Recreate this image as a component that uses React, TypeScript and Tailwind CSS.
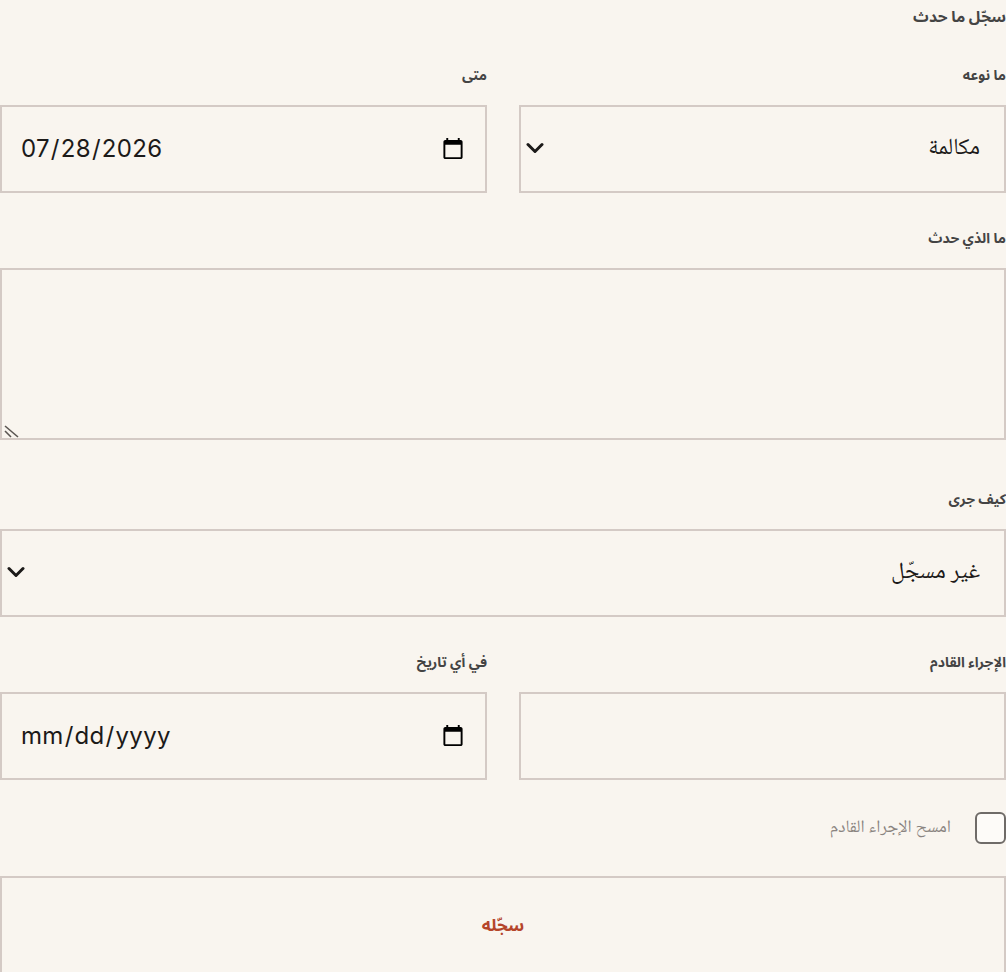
import { useState } from "react";

const naskh = '"Noto Naskh Arabic", "Noto Sans Arabic", "DejaVu Sans", sans-serif';
const sansArabic = '"Noto Sans Arabic", "DejaVu Sans", sans-serif';
const arabicInput = { fontFamily: naskh };

const labelCls = "block text-[14px] leading-5 font-bold text-[#444]";
const fieldCls =
  "block w-full h-[88px] mt-5 border-2 border-[#d4cac5] bg-[#f9f5ef] px-[18px] text-[24px] text-[#1c1a19] outline-none";

function Chevron() {
  return (
    <svg
      width="18"
      height="11"
      viewBox="0 0 18 11"
      className="pointer-events-none absolute left-[7px] top-[43px] -translate-y-1/2"
    >
      <polyline points="2,2 9,9 16,2" fill="none" stroke="#1c1a19" strokeWidth="3" strokeLinecap="round" strokeLinejoin="round" />
    </svg>
  );
}

function Select({ options, value }: { options: { v: string; t: string }[]; value: string }) {
  return (
    <div className="relative mt-5">
      <select
        defaultValue={value}
        style={arabicInput}
        className="block w-full h-[88px] appearance-none border-2 border-[#d4cac5] bg-[#f9f5ef] pr-6 pl-10 text-[23px] text-[#1c1a19] outline-none"
      >
        {options.map((o) => (
          <option key={o.v} value={o.v}>
            {o.t}
          </option>
        ))}
      </select>
      <Chevron />
    </div>
  );
}

export default function App() {
  const [clearNext, setClearNext] = useState(false);

  return (
    <div
      dir="rtl"
      className="min-h-[972px] w-full bg-[#f9f5ef] pt-[7px]"
      style={{ fontFamily: '"Inter", ' + sansArabic }}
    >
      <h2 className="text-[15.5px] leading-5 font-bold text-[#444]">سجّل ما حدث</h2>

      <div className="mt-[38px] grid grid-cols-2 gap-8">
        <div>
          <label className={labelCls}>ما نوعه</label>
          <Select
            value="call"
            options={[
              { v: "call", t: "مكالمة" },
              { v: "meeting", t: "اجتماع" },
              { v: "email", t: "بريد" },
            ]}
          />
        </div>
        <div>
          <label className={labelCls}>متى</label>
          <input type="date" dir="ltr" className={fieldCls + " tracking-[0.3px]"} defaultValue="2026-07-28" />
        </div>
      </div>

      <div className="mt-[35px]">
        <label className={labelCls}>ما الذي حدث</label>
        <div className="relative mt-5">
          <textarea className="block w-full h-[172px] resize-none border-2 border-[#d4cac5] bg-[#f9f5ef] p-[18px] text-[22px] outline-none" style={arabicInput} />
          <svg width="16" height="14" viewBox="0 0 16 14" className="pointer-events-none absolute left-[3px] bottom-[2px]">
            <line x1="2" y1="2" x2="15" y2="13" stroke="#5a5552" strokeWidth="1.6" />
            <line x1="2" y1="7" x2="8" y2="13" stroke="#5a5552" strokeWidth="1.6" />
          </svg>
        </div>
      </div>

      <div className="mt-[49px]">
        <label className={labelCls}>كيف جرى</label>
        <Select
          value="none"
          options={[
            { v: "none", t: "غير مسجّل" },
            { v: "good", t: "جيد" },
            { v: "bad", t: "سيئ" },
          ]}
        />
      </div>

      <div className="mt-[35px] grid grid-cols-2 gap-8">
        <div>
          <label className={labelCls}>الإجراء القادم</label>
          <input type="text" className={fieldCls} style={arabicInput} />
        </div>
        <div>
          <label className={labelCls}>في أي تاريخ</label>
          <input type="date" dir="ltr" className={fieldCls + " tracking-[0.3px]"} />
        </div>
      </div>

      <label className="mt-8 flex items-center gap-6 cursor-pointer">
        <input
          type="checkbox"
          checked={clearNext}
          onChange={(e) => setClearNext(e.target.checked)}
          className="appearance-none w-[31px] h-[32px] rounded-md border-2 border-[#6f6b68] bg-[#fdfbf8] checked:bg-[#b5452a]"
        />
        <span className="text-[17.5px] text-[#8a8480]" style={arabicInput}>
          امسح الإجراء القادم
        </span>
      </label>

      <button
        type="button"
        className="mt-8 block w-full h-[100px] border-2 border-[#d4cac5] bg-[#f9f5ef] text-[17px] font-bold text-[#b5452a]"
      >
        سجّله
      </button>
    </div>
  );
}
